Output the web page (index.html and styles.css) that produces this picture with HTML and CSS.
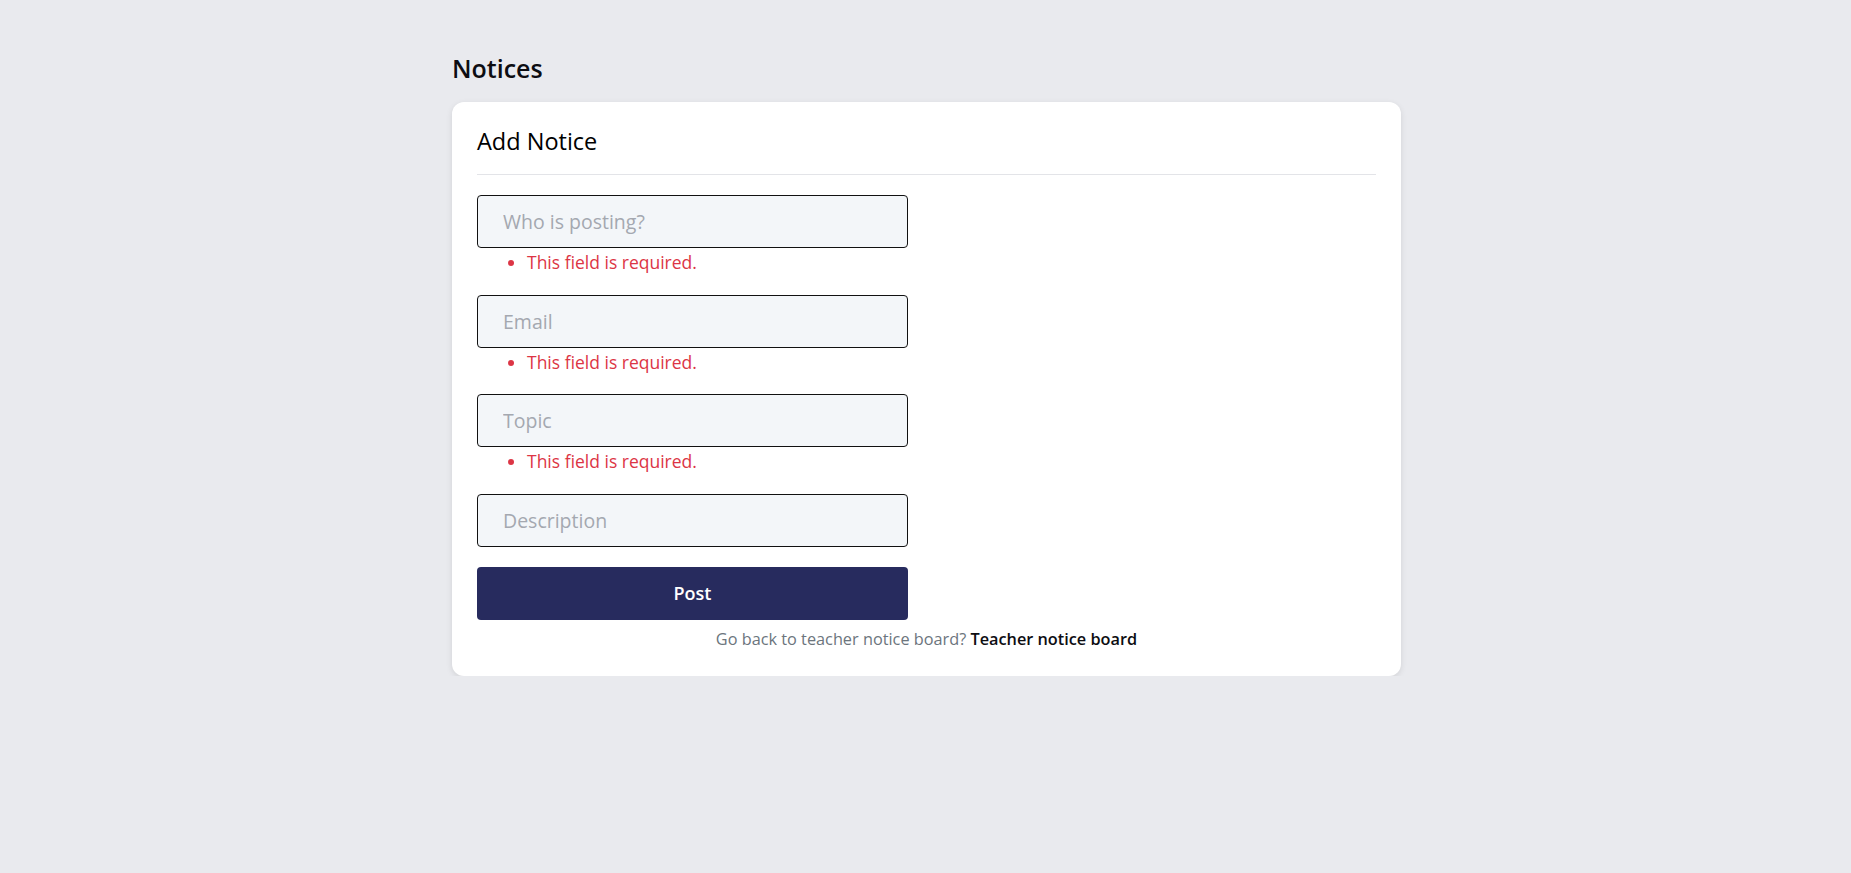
FILE: index.html
```html
<!DOCTYPE html>
<html lang="en">
<head>
<meta charset="utf-8">
<title>Notices</title>
<link rel="stylesheet" href="styles.css">
</head>
<body>
<main class="page">
  <h1 class="page-title">Notices</h1>
  <section class="card">
    <h2 class="card-title">Add Notice</h2>
    <form class="form">
      <div class="field">
        <input class="input" type="text" placeholder="Who is posting?">
        <ul class="errors"><li>This field is required.</li></ul>
      </div>
      <div class="field">
        <input class="input" type="email" placeholder="Email">
        <ul class="errors"><li>This field is required.</li></ul>
      </div>
      <div class="field">
        <input class="input" type="text" placeholder="Topic">
        <ul class="errors"><li>This field is required.</li></ul>
      </div>
      <div class="field field-last">
        <input class="input" type="text" placeholder="Description">
      </div>
      <button class="btn" type="button">Post</button>
    </form>
    <p class="footer-note">Go back to teacher notice board? <a class="footer-link" href="#">Teacher notice board</a></p>
  </section>
</main>
</body>
</html>
```
FILE: styles.css
```css
* { box-sizing: border-box; }
html, body { margin: 0; padding: 0; }
body {
  background: #e9eaee;
  font-family: "Open Sans", "Noto Sans", sans-serif;
  color: #111;
}
.page {
  width: 949px;
  margin: 0 auto;
  padding-top: 50px;
  position: relative;
  left: 1px;
}
.page-title {
  margin: 0 0 16px 0;
  font-size: 25px;
  font-weight: 600;
  line-height: 36px;
  color: #0d0d12;
}
.card {
  background: #fff;
  border-radius: 12px;
  box-shadow: 0 2px 6px rgba(0, 0, 0, 0.1);
  padding: 22px 25px 25px 25px;
}
.card-title {
  margin: 0;
  font-size: 23.5px;
  font-weight: 500;
  line-height: 34px;
  padding-bottom: 16px;
  border-bottom: 1px solid #e3e4e8;
  color: #000;
}
.form {
  width: 431px;
  padding-top: 20px;
  display: flex;
  flex-direction: column;
}
.field { margin-bottom: 20px; }
.field-last { margin-bottom: 20px; }
.input {
  display: block;
  width: 100%;
  height: 53px;
  border: 1px solid #111;
  border-radius: 4px;
  background: #f3f6f9;
  padding: 0 25px;
  font-family: inherit;
  font-size: 19.5px;
  color: #222;
  outline: none;
}
.input::placeholder { color: #a4a8b0; }
.errors {
  margin: 2px 0 0 0;
  padding: 0 0 0 50px;
  list-style: disc;
  color: #dc3545;
  font-size: 17.5px;
  line-height: 24.5px;
}
.errors li::marker { font-size: 17px; }
.btn {
  display: block;
  width: 100%;
  height: 53px;
  border: none;
  border-radius: 4px;
  background: #272b5e;
  color: #fff;
  font-family: inherit;
  font-size: 18px;
  font-weight: 600;
}
.footer-note {
  margin: 7px 0 0 0;
  text-align: center;
  font-size: 16.3px;
  line-height: 24px;
  color: #6c757d;
}
.footer-link {
  color: #0d0d12;
  font-weight: 600;
  text-decoration: none;
}
```
